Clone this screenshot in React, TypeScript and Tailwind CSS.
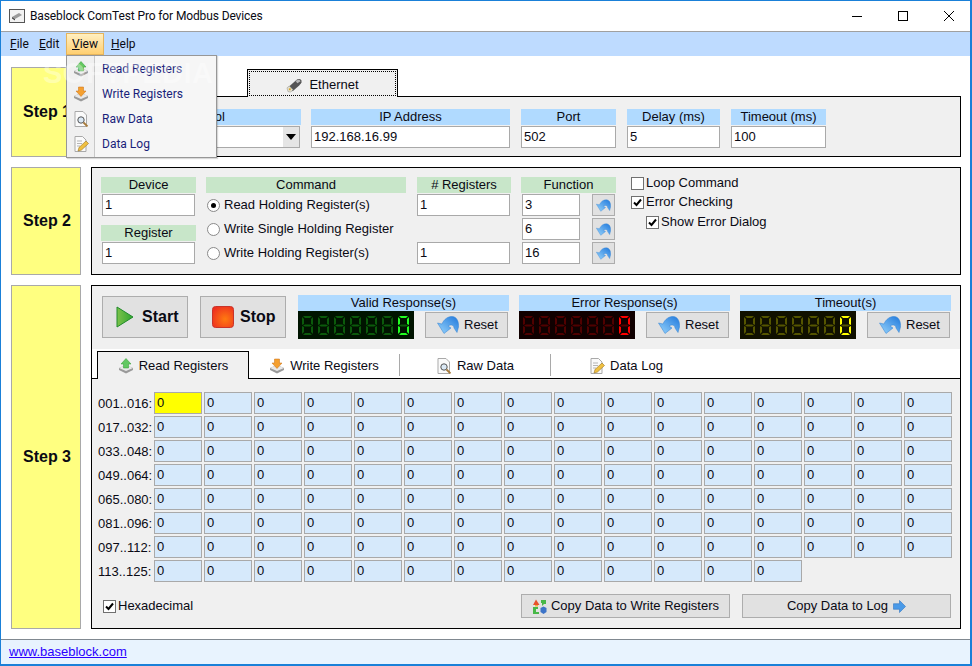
import type { ReactNode } from 'react';

const rowLabels = ['001..016:', '017..032:', '033..048:', '049..064:', '065..080:', '081..096:', '097..112:', '113..125:'];

function Undo({ className = 'w-[22px] h-[18px]' }: { className?: string }) {
  return (
    <svg viewBox="0 0 22 18" className={className}>
      <defs>
        <linearGradient id="undoBlue" x1="1" y1="0" x2="0" y2="1">
          <stop offset="0" stopColor="#1f78dc" />
          <stop offset="1" stopColor="#9ad6fc" />
        </linearGradient>
      </defs>
      <path d="M0.5 7 L5 8 C7 3 11 0.5 15 0.5 C20 0.5 22 6 21.5 11 L20 16.5 L17 12 C17 9 14 8 11 10 L14 12 L7 17.5 Z" fill="url(#undoBlue)" stroke="#2f80d4" strokeWidth="0.5" />
    </svg>
  );
}

function TrayIcon({ color, down }: { color: string; down?: boolean }) {
  return (
    <svg viewBox="0 0 16 16" className="w-4 h-4 shrink-0">
      <path d="M1 10 L8 7 L15 10 L15 12 L8 15.5 L1 12 Z" fill="#9a9a9a" />
      <path d="M1 10 L8 13 L15 10 L8 7 Z" fill="#e9e9e9" />
      {down ? (
        <path d="M5.5 1 H10.5 V5 H13 L8 10.5 L3 5 H5.5 Z" fill={color} stroke="#c96f10" strokeWidth="0.5" />
      ) : (
        <path d="M8 0.5 L13 6 H10.5 V10 H5.5 V6 H3 Z" fill={color} stroke="#2f9a2f" strokeWidth="0.5" />
      )}
    </svg>
  );
}

function DocSearchIcon() {
  return (
    <svg viewBox="0 0 16 16" className="w-4 h-4 shrink-0">
      <path d="M2 0.5 H10 L13.5 4 V15.5 H2 Z" fill="#fafafa" stroke="#a9a9a9" />
      <circle cx="8" cy="9" r="3.2" fill="#dbe9f5" stroke="#555" />
      <path d="M10.5 11.5 L14.5 15.5" stroke="#a77a3a" strokeWidth="1.8" />
    </svg>
  );
}

function DocPencilIcon() {
  return (
    <svg viewBox="0 0 16 16" className="w-4 h-4 shrink-0">
      <path d="M2 0.5 H9.5 L13 4 V15.5 H2 Z" fill="#fafafa" stroke="#a9a9a9" />
      <path d="M4 5 H9 M4 7.5 H9 M4 10 H7" stroke="#b5b5b5" />
      <path d="M5 15 L6 11.5 L13 5 L15.5 7.5 L8.5 14 Z" fill="#f0c040" stroke="#9a7420" strokeWidth="0.6" />
    </svg>
  );
}

function PlugIcon() {
  return (
    <svg viewBox="0 0 18 16" className="w-[17px] h-[15px]">
      <path d="M2 10 L11 2 C13 0.5 16 1 16.5 3 C17 5 15 7 14 8 L7 14 Z" fill="#555" />
      <path d="M10 3 L14 1.5 L15.5 3.5 L12 5.5 Z" fill="#b9b9b9" />
      <path d="M1 10.5 L3.5 8.5 L7.5 12.5 L5 15 L2 14.5 Z" fill="#e3e0d4" stroke="#8c8c7c" strokeWidth="0.5" />
      <rect x="3" y="11" width="2" height="2" fill="#d8a628" />
    </svg>
  );
}

function CopyIcon() {
  return (
    <svg viewBox="0 0 15 15" className="w-[15px] h-[15px]">
      <path d="M4 0.5 L7.5 6 H1 Z" fill="#e8502c" />
      <path d="M3 6 H6 V7.5 H3 Z" fill="#f3b13c" />
      <path d="M9 1 H14 V5 H12 L10 7 V4 H9 Z" fill="#48b848" />
      <path d="M1 8 H6 V10 H4 V13 H7 V15 H1 Z" fill="#48b848" />
      <path d="M8.5 9 L11.5 7.5 L14.5 9 V13 L11.5 15 L8.5 13 Z" fill="#3d74c8" />
    </svg>
  );
}

function ArrowRightIcon() {
  return (
    <svg viewBox="0 0 14 14" className="w-[13px] h-[13px]">
      <path d="M0.5 4 H7 V0.5 L13.5 7 L7 13.5 V10 H0.5 Z" fill="#4a9ae8" stroke="#2a70c0" strokeWidth="0.6" />
    </svg>
  );
}

function Digit({ on, dim, active }: { on: string; dim: string; active?: boolean }) {
  const c = active ? on : dim;
  return (
    <svg viewBox="0 0 11 19" className="w-[11px] h-[19px]">
      <polygon points="1,0 10,0 8,2 3,2" fill={c} />
      <polygon points="0,1 2,3 2,8 0,9" fill={c} />
      <polygon points="11,1 9,3 9,8 11,9" fill={c} />
      <polygon points="1,9.5 3,8.5 8,8.5 10,9.5 8,10.5 3,10.5" fill={dim} />
      <polygon points="0,10 2,11 2,16 0,18" fill={c} />
      <polygon points="11,10 9,11 9,16 11,18" fill={c} />
      <polygon points="1,19 3,17 8,17 10,19" fill={c} />
    </svg>
  );
}

function Counter({ title, on, dim, bg }: { title: string; on: string; dim: string; bg: string }) {
  return (
    <div className="w-[211px]">
      <div className="h-4 bg-[#b0daff] text-center text-[13px] leading-4">{title}</div>
      <div className="flex items-start justify-between pr-px">
        <div className={`w-[116px] h-[28px] flex items-center gap-[5px] pl-1 ${bg}`}>
          {[0, 1, 2, 3, 4, 5, 6].map((i) => (
            <Digit key={i} on={on} dim={dim} active={i === 6} />
          ))}
        </div>
        <button className="mt-px w-[83px] h-[26px] flex items-center pl-[11px] gap-[5px] bg-[#e1e1e1] border border-[#adadad] text-[13px]">
          <Undo />
          Reset
        </button>
      </div>
    </div>
  );
}

function Box({ children, className = '' }: { children?: ReactNode; className?: string }) {
  return <div className={`h-[22px] bg-white border border-[#a9a9a9] pl-[2px] text-[13px] leading-[20px] ${className}`}>{children}</div>;
}

function Label({ children, tone, className = '' }: { children: ReactNode; tone: 'blue' | 'green'; className?: string }) {
  return (
    <div className={`h-4 text-center text-[13px] leading-4 ${tone === 'blue' ? 'bg-[#b0daff]' : 'bg-[#c8e6c9]'} ${className}`}>{children}</div>
  );
}

function Field({ label, value, width }: { label: string; value: string; width: string }) {
  return (
    <div className={width}>
      <Label tone="blue">{label}</Label>
      <Box className="mt-[1px]">{value}</Box>
    </div>
  );
}

function Check({ checked, label, className = '' }: { checked?: boolean; label: string; className?: string }) {
  return (
    <div className={`flex items-center gap-[2px] text-[13px] h-4 ${className}`}>
      <span className="w-[13px] h-[13px] bg-white border border-[#707070] flex items-center justify-center">
        {checked && (
          <svg viewBox="0 0 11 11" className="w-[11px] h-[11px]">
            <path d="M2 5.5 L4.5 8 L9 2.5" fill="none" stroke="#000" strokeWidth="2" />
          </svg>
        )}
      </span>
      {label}
    </div>
  );
}

function Radio({ checked, label }: { checked?: boolean; label: string }) {
  return (
    <div className="flex items-center gap-[4px] h-[22px] pl-px text-[13px] whitespace-nowrap">
      <span className="w-[13px] h-[13px] shrink-0 rounded-full bg-white border border-[#8a8a8a] flex items-center justify-center">
        {checked && <span className="w-[5px] h-[5px] rounded-full bg-black" />}
      </span>
      {label}
    </div>
  );
}

function StepBox({ children }: { children: string }) {
  return (
    <div className="w-[70px] shrink-0 pl-[2px] bg-[#ffff80] border border-[#a9a9a9] flex items-center justify-center font-bold text-[16px]">
      {children}
    </div>
  );
}

function UndoButton() {
  return (
    <button className="w-[23px] h-[22px] bg-[#e1e1e1] border border-[#adadad] flex items-center justify-center">
      <Undo className="w-[15px] h-[13px]" />
    </button>
  );
}

function MenuItem({ icon, label }: { icon: ReactNode; label: string }) {
  return (
    <div className="h-[25px] flex items-center">
      <span className="w-[28px] flex justify-center">{icon}</span>
      <span className="ml-[7px]">{label}</span>
    </div>
  );
}

export default function App() {
  return (
    <div className="relative w-[972px] h-[666px] overflow-hidden flex flex-col bg-white text-[#0a0a14] border-t border-l border-r-2 border-b-2 border-[#1a80d8] font-['Liberation_Sans',Arial,sans-serif]">
      {/* title bar */}
      <div className="h-[31px] shrink-0 flex items-center border-b border-[#a0a0a0] font-['Roboto',sans-serif] text-[12px]">
        <svg viewBox="0 0 16 16" className="w-4 h-4 ml-[8px]">
          <rect x="0.5" y="1.5" width="15" height="13" fill="#f2f2f2" stroke="#555" />
          <path d="M3 9 L10 5 L13 7 L6 11 Z" fill="#9a9a9a" />
          <path d="M3 9 L6 11 V12.5 L3 10.5 Z" fill="#444" />
        </svg>
        <span className="ml-[5px] tracking-[-0.12px]">Baseblock ComTest Pro for Modbus Devices</span>
        <div className="ml-auto flex items-center text-black">
          <svg viewBox="0 0 46 12" className="w-[46px] h-3">
            <path d="M1 6.5 H11" stroke="#000" />
          </svg>
          <svg viewBox="0 0 46 12" className="w-[46px] h-3">
            <rect x="1.5" y="1.5" width="9" height="9" fill="none" stroke="#000" />
          </svg>
          <svg viewBox="0 0 27 12" className="w-[27px] h-3">
            <path d="M1 1 L11 11 M11 1 L1 11" stroke="#000" />
          </svg>
        </div>
      </div>

      {/* menu bar */}
      <div className="h-[24px] shrink-0 bg-[#bedbff] flex items-center pl-[9px] font-['Roboto',sans-serif] text-[12px]">
        <span className="w-[29px]"><u>F</u>ile</span>
        <span className="w-[27px]"><u>E</u>dit</span>
        <span className="w-[38px] h-[22px] mt-[-1px] pl-[5px] flex items-center bg-gradient-to-b from-[#ffefc0] to-[#ffcf70] border border-[#e5b45c]"><span><u>V</u>iew</span></span>
        <span className="ml-[7px]"><u>H</u>elp</span>
      </div>

      <div className="flex-1 flex flex-col gap-[10px] pl-[10px] pr-[9px] pt-[11px]">
        {/* step 1 */}
        <div className="h-[90px] flex gap-[10px]">
          <StepBox>Step 1</StepBox>
          <div className="flex-1 flex flex-col">
            <div className="h-[29px] pl-[156px] flex pt-[2px]">
              <div className="relative z-10 -mb-px w-[151px] border-t border-x border-black bg-[#f0f0f0] p-px">
                <div className="h-full pt-[3px] border border-dotted border-black flex items-center justify-center gap-[6px] text-[13px]">
                  <PlugIcon />
                  Ethernet
                </div>
              </div>
            </div>
            <div className="flex-1 bg-[#f0f0f0] border border-black pt-3 pl-[9px] flex gap-[10px]">
              <div className="w-[200px]">
                <Label tone="blue">Protocol</Label>
                <div className="mt-[1px] mx-px h-[22px] bg-white border border-[#a9a9a9] flex justify-end">
                  <span className="w-4 bg-[#e5e5e5] flex items-center justify-center">
                    <span className="w-0 h-0 border-x-[5px] border-x-transparent border-t-[6px] border-t-black" />
                  </span>
                </div>
              </div>
              <Field label="IP Address" value="192.168.16.99" width="w-[199px]" />
              <Field label="Port" value="502" width="w-[95px] ml-px" />
              <Field label="Delay (ms)" value="5" width="w-[93px] ml-px" />
              <Field label="Timeout (ms)" value="100" width="w-[95px] ml-px" />
            </div>
          </div>
        </div>

        {/* step 2 */}
        <div className="h-[108px] flex gap-[10px]">
          <StepBox>Step 2</StepBox>
          <div className="flex-1 bg-[#f0f0f0] border border-black pt-[9px] pl-[9px] flex">
            <div className="w-[95px]">
              <Label tone="green">Device</Label>
              <Box className="mt-[1px] mx-px">1</Box>
              <Label tone="green" className="mt-[9px]">Register</Label>
              <Box className="mt-[1px] mx-px">1</Box>
            </div>
            <div className="w-[200px] ml-[10px]">
              <Label tone="green">Command</Label>
              <div className="mt-[1px] flex flex-col gap-[2px]">
                <Radio checked label="Read Holding Register(s)" />
                <Radio label="Write Single Holding Register" />
                <Radio label="Write Holding Register(s)" />
              </div>
            </div>
            <div className="w-[94px] ml-[11px]">
              <Label tone="green"># Registers</Label>
              <Box className="mt-[1px] mr-px">1</Box>
              <Box className="mt-[26px] mr-px">1</Box>
            </div>
            <div className="w-[95px] ml-[10px]">
              <Label tone="green">Function</Label>
              <div className="mt-[1px] flex flex-col gap-[2px]">
                {['3', '6', '16'].map((v) => (
                  <div key={v} className="flex justify-between pl-px pr-px">
                    <Box className="w-[58px]">{v}</Box>
                    <UndoButton />
                  </div>
                ))}
              </div>
            </div>
            <div className="ml-[15px] -mt-[2px] flex flex-col gap-[3px]">
              <Check label="Loop Command" />
              <Check checked label="Error Checking" />
              <Check checked label="Show Error Dialog" className="ml-[15px] mt-px" />
            </div>
          </div>
        </div>

        {/* step 3 */}
        <div className="h-[344px] flex gap-[10px]">
          <StepBox>Step 3</StepBox>
          <div className="flex-1 bg-[#f0f0f0] border border-black flex flex-col">
            <div className="h-[63px] shrink-0 flex pl-[10px] pt-[9px]">
              <button className="mt-px w-[86px] h-[42px] bg-[#e1e1e1] border border-[#adadad] flex items-center pl-[13px] gap-[8px] font-bold text-[16px]">
                <svg viewBox="0 0 18 22" className="w-[18px] h-[22px]">
                  <defs>
                    <linearGradient id="playGreen" x1="0" y1="0" x2="1" y2="0">
                      <stop offset="0" stopColor="#7cc24a" />
                      <stop offset="1" stopColor="#2fa52f" />
                    </linearGradient>
                  </defs>
                  <path d="M1 1 L17 11 L1 21 Z" fill="url(#playGreen)" stroke="#1f8a2a" strokeLinejoin="round" />
                </svg>
                Start
              </button>
              <button className="mt-px ml-[12px] w-[86px] h-[42px] bg-[#e1e1e1] border border-[#adadad] flex items-center pl-[11px] gap-[6px] font-bold text-[16px]">
                <svg viewBox="0 0 22 22" className="w-[22px] h-[22px]">
                  <defs>
                    <radialGradient id="stopRed" cx="0.6" cy="0.6" r="0.7">
                      <stop offset="0" stopColor="#ff7a10" />
                      <stop offset="1" stopColor="#ee2f20" />
                    </radialGradient>
                  </defs>
                  <rect x="0.5" y="0.5" width="21" height="21" rx="3" fill="url(#stopRed)" stroke="#c8342a" />
                </svg>
                Stop
              </button>
              <div className="ml-[12px] flex gap-[10px]">
                <Counter title="Valid Response(s)" on="#22ff22" dim="#0b5a0b" bg="bg-[#001400]" />
                <Counter title="Error Response(s)" on="#ff0000" dim="#500000" bg="bg-[#100000]" />
                <Counter title="Timeout(s)" on="#ffff00" dim="#555500" bg="bg-[#101000]" />
              </div>
            </div>

            {/* tabs */}
            <div className="h-[30px] shrink-0 bg-white border-b border-black flex items-end pl-[5px] text-[13px]">
              <div className="relative z-10 -mb-px w-[152px] h-[28px] pt-px bg-[#f0f0f0] border-t border-x border-black flex items-center justify-center gap-[5px]">
                <TrayIcon color="#62c862" />
                Read Registers
              </div>
              <div className="w-[150px] h-[28px] pt-[3px] flex items-center justify-center gap-[5px]">
                <TrayIcon color="#f5a030" down />
                Write Registers
              </div>
              <div className="w-px h-[22px] mb-[2px] bg-[#a9a9a9]" />
              <div className="w-[150px] h-[28px] pt-[3px] flex items-center justify-center gap-[5px]">
                <DocSearchIcon />
                Raw Data
              </div>
              <div className="w-px h-[22px] mb-[2px] bg-[#a9a9a9]" />
              <div className="w-[150px] h-[28px] pt-[3px] flex items-center justify-center gap-[5px]">
                <DocPencilIcon />
                Data Log
              </div>
            </div>

            {/* register grid */}
            <div className="flex-1 pt-[13px] flex flex-col">
              <div className="flex flex-col gap-[2px]">
                {rowLabels.map((label, r) => (
                  <div key={label} className="flex items-center">
                    <span className="w-[62px] pl-[6px] pt-px text-[13px]">{label}</span>
                    <div className="flex gap-[2px]">
                      {Array.from({ length: r === 7 ? 13 : 16 }).map((_, c) => (
                        <div
                          key={c}
                          className={`w-[48px] h-[22px] border border-[#a9a9a9] pl-[2px] text-[13px] leading-[20px] ${r === 0 && c === 0 ? 'bg-[#ffff00]' : 'bg-[#d6e9fb]'}`}
                        >
                          0
                        </div>
                      ))}
                    </div>
                  </div>
                ))}
              </div>
              <div className="mt-[12px] h-6 flex items-center pl-[11px] pr-[9px] text-[13px]">
                <Check checked label="Hexadecimal" />
                <button className="ml-auto w-[209px] h-6 bg-[#e1e1e1] border border-[#adadad] flex items-center justify-center gap-[4px]">
                  <CopyIcon />
                  Copy Data to Write Registers
                </button>
                <button className="ml-[12px] w-[209px] h-6 bg-[#e1e1e1] border border-[#adadad] flex items-center justify-center gap-[5px]">
                  Copy Data to Log
                  <ArrowRightIcon />
                </button>
              </div>
            </div>
          </div>
        </div>
      </div>

      {/* status bar */}
      <div className="h-[25px] shrink-0 bg-[#e8f3fe] border-t border-[#808890] flex items-center pl-2 text-[13px]">
        <a className="text-[#2a00ff] underline">www.baseblock.com</a>
      </div>

      {/* open View menu */}
      <div className="absolute left-[65px] top-[54px] z-20 w-[151px] h-[103px] bg-[#f6f6f6] border border-[#979797] shadow-[1px_1px_1px_rgba(0,0,0,0.15)] font-['Roboto',sans-serif] text-[12px] text-[#1a1f7a]">
        <div className="absolute left-0 top-0 bottom-0 w-[28px] bg-[#f0f0f0] border-r border-[#c8c8c8]" />
        <div className="relative">
          <MenuItem icon={<TrayIcon color="#62c862" />} label="Read Registers" />
          <MenuItem icon={<TrayIcon color="#f5a030" down />} label="Write Registers" />
          <MenuItem icon={<DocSearchIcon />} label="Raw Data" />
          <MenuItem icon={<DocPencilIcon />} label="Data Log" />
        </div>
      </div>

      {/* watermark */}
      <div className="absolute left-[42px] top-[57px] z-30 pointer-events-none text-white/35 font-bold text-[29px] leading-[30px] tracking-[0.5px]">
        SOFTPEDIA
      </div>
    </div>
  );
}
